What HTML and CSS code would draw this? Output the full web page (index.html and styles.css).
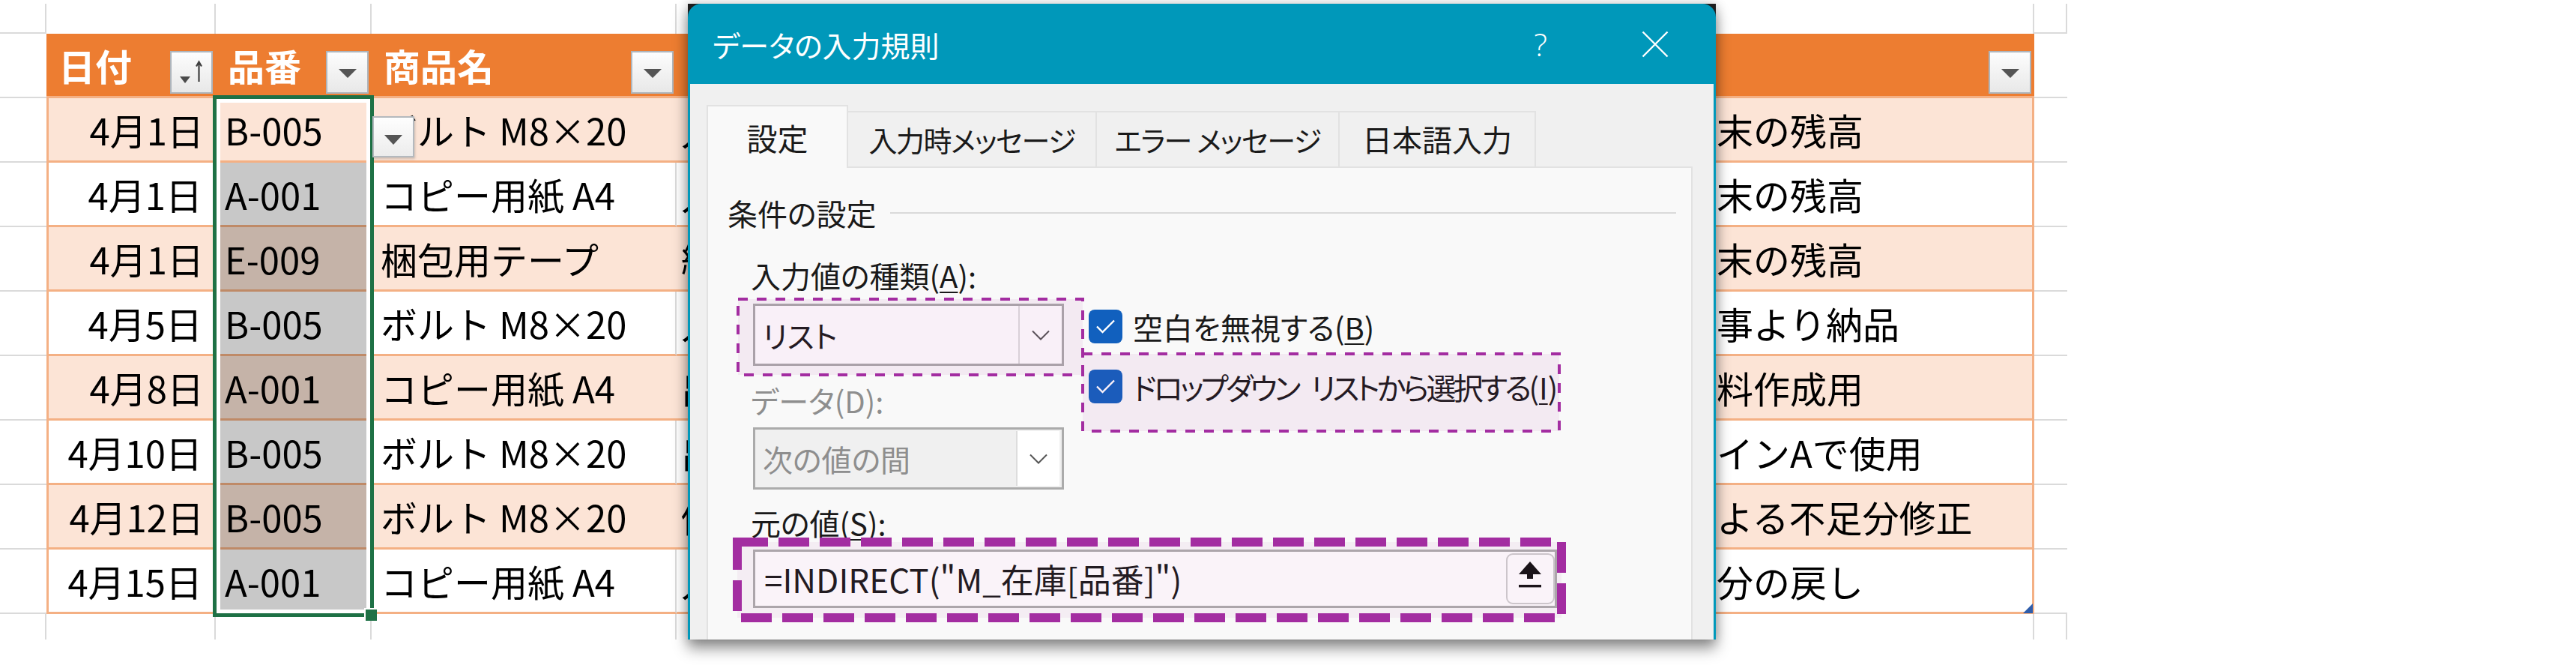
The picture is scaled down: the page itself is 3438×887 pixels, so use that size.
FILE: index.html
```html
<!DOCTYPE html>
<html lang="ja">
<head>
<meta charset="utf-8">
<title>データの入力規則</title>
<link rel="stylesheet" href="styles.css">
</head>
<body>
<div class="screen">
  <div class="sheet">
    <!-- blank row above the table -->
    <div class="c top edge"></div><div class="c top"></div><div class="c top"></div><div class="c top"></div><div class="c top"></div><div class="c top"></div><div class="c top"></div><div class="c top edge"></div>

    <!-- table header -->
    <div class="c rh"></div>
    <div class="c h"><span>日付</span>
      <span class="fb"><svg width="57" height="57" viewBox="0 0 57 57"><polygon points="13,34 27,34 20,43" fill="#4a4a4a"/><path d="M38.5 41V15M35 20.5L38.5 14.5L42 20.5" stroke="#404040" stroke-width="2.2" fill="none"/></svg></span></div>
    <div class="c h"><span>品番</span>
      <span class="fb"><svg width="57" height="57" viewBox="0 0 57 57"><polygon points="17,24 41,24 29,36" fill="#555"/></svg></span></div>
    <div class="c h"><span>商品名</span>
      <span class="fb"><svg width="57" height="57" viewBox="0 0 57 57"><polygon points="17,24 41,24 29,36" fill="#555"/></svg></span></div>
    <div class="c h"></div>
    <div class="c h"></div>
    <div class="c h"><span>備考</span>
      <span class="fb"><svg width="57" height="57" viewBox="0 0 57 57"><polygon points="17,24 41,24 29,36" fill="#555"/></svg></span></div>
    <div class="c rh"></div>

    <!-- rows -->
    <div class="c rh"></div>
    <div class="c d odd first num">4月1日</div><div class="c d odd">B-005</div><div class="c d odd">ボルト M8×20</div><div class="c d odd kd">入</div><div class="c d odd"></div><div class="c d odd last">前年度末の残高</div>
    <div class="c rh"></div>

    <div class="c rh"></div>
    <div class="c d even first num">4月1日</div><div class="c d even">A-001</div><div class="c d even">コピー用紙 A4</div><div class="c d even kd">入</div><div class="c d even"></div><div class="c d even last">前年度末の残高</div>
    <div class="c rh"></div>

    <div class="c rh"></div>
    <div class="c d odd first num">4月1日</div><div class="c d odd">E-009</div><div class="c d odd">梱包用テープ</div><div class="c d odd kd">繰</div><div class="c d odd"></div><div class="c d odd last">前年度末の残高</div>
    <div class="c rh"></div>

    <div class="c rh"></div>
    <div class="c d even first num">4月5日</div><div class="c d even">B-005</div><div class="c d even">ボルト M8×20</div><div class="c d even kd">入</div><div class="c d even"></div><div class="c d even last">山田商事より納品</div>
    <div class="c rh"></div>

    <div class="c rh"></div>
    <div class="c d odd first num">4月8日</div><div class="c d odd">A-001</div><div class="c d odd">コピー用紙 A4</div><div class="c d odd kd">出</div><div class="c d odd"></div><div class="c d odd last">会議資料作成用</div>
    <div class="c rh"></div>

    <div class="c rh"></div>
    <div class="c d even first num">4月10日</div><div class="c d even">B-005</div><div class="c d even">ボルト M8×20</div><div class="c d even kd">出</div><div class="c d even"></div><div class="c d even last">生産ラインAで使用</div>
    <div class="c rh"></div>

    <div class="c rh"></div>
    <div class="c d odd first num">4月12日</div><div class="c d odd">B-005</div><div class="c d odd">ボルト M8×20</div><div class="c d odd kd">修</div><div class="c d odd"></div><div class="c d odd last">棚卸による不足分修正</div>
    <div class="c rh"></div>

    <div class="c rh"></div>
    <div class="c d even first num">4月15日</div><div class="c d even">A-001</div><div class="c d even">コピー用紙 A4</div><div class="c d even kd">入</div><div class="c d even"></div><div class="c d even last">未使用分の戻し</div>
    <div class="c rh"></div>

    <!-- blank row below the table -->
    <div class="c bot"></div><div class="c bot"></div><div class="c bot"></div><div class="c bot"></div><div class="c bot"></div><div class="c bot"></div><div class="c bot"></div><div class="c bot"></div>

    <!-- selection of the 品番 column -->
    <div class="sel-fill"></div>
    <div class="sel-box"></div>
    <div class="fill-handle"></div>
    <div class="dv-btn"><svg width="56" height="55" viewBox="0 0 56 55"><polygon points="16,25 40,25 28,38" fill="#555"/></svg></div>
    <div class="resize"></div>
  </div>

  <div class="dialog">
    <div class="dlg-title">
      <span class="dlg-name">データの入力規則</span>
      <span class="dlg-help">?</span>
      <span class="dlg-close"><svg width="36" height="36" viewBox="0 0 36 36"><path d="M1.5 1.5L34.5 34.5M34.5 1.5L1.5 34.5" stroke="#fff" stroke-width="2.4"/></svg></span>
    </div>
    <div class="dlg-body">
      <div class="tabs">
        <div class="tab on w1">設定</div>
        <div class="tab w2 kana">入力時メッセージ</div>
        <div class="tab w3 kana">エラー メッセージ</div>
        <div class="tab w4">日本語入力</div>
      </div>
      <div class="panel">
        <div class="group"><span>条件の設定</span><span class="rule"></span></div>
        <div class="cols">
          <div class="left">
            <div class="lbl">入力値の種類(<u>A</u>):</div>
            <div class="combo on">
              <span class="val">リスト</span>
              <span class="btn"><svg width="24" height="14" viewBox="0 0 24 14"><path d="M1 1.5L12 12.5L23 1.5" stroke="#555" stroke-width="2" fill="none"/></svg></span>
            </div>
            <div class="lbl off lbl-d">データ(D):</div>
            <div class="combo off">
              <span class="val">次の値の間</span>
              <span class="btn"><svg width="24" height="14" viewBox="0 0 24 14"><path d="M1 1.5L12 12.5L23 1.5" stroke="#555" stroke-width="2" fill="none"/></svg></span>
            </div>
          </div>
          <div class="right">
            <div class="chk"><svg width="45" height="45" viewBox="0 0 45 45"><rect x="0" y="0" width="45" height="45" rx="8" fill="#1160BE"/><path d="M11 22.5L18.5 30L34 14.5" stroke="#fff" stroke-width="2.4" fill="none"/></svg><span>空白を無視する(<u>B</u>)</span></div>
            <div class="chk"><svg width="45" height="45" viewBox="0 0 45 45"><rect x="0" y="0" width="45" height="45" rx="8" fill="#1160BE"/><path d="M11 22.5L18.5 30L34 14.5" stroke="#fff" stroke-width="2.4" fill="none"/></svg><span><span class="tight">ドロップダウン リストから選択する</span>(<u>I</u>)</span></div>
          </div>
        </div>
        <div class="lbl lbl-s">元の値(<u>S</u>):</div>
        <div class="src">
          <span class="formula">=INDIRECT("M_在庫[品番]")</span>
          <span class="pick"><svg width="65" height="68" viewBox="0 0 65 68"><path d="M32 11L47 28H36V34H28V28H17Z" fill="#111"/><rect x="17" y="42" width="30" height="3.4" fill="#111"/></svg></span>
        </div>
      </div>
    </div>
    <svg class="marks" width="1372" height="848" viewBox="0 0 1372 848">
      <rect x="67" y="394" width="460" height="101" fill="rgba(163,45,161,0.07)" stroke="#A32DA1" stroke-width="4" stroke-dasharray="13 12"/>
      <rect x="527" y="467" width="636" height="103" fill="rgba(163,45,161,0.07)" stroke="#A32DA1" stroke-width="4" stroke-dasharray="13 12"/>
      <rect x="66" y="718" width="1100" height="101" fill="rgba(163,45,161,0.06)" stroke="#A32DA1" stroke-width="12" stroke-dasharray="41 14"/>
    </svg>
  </div>
</div>
</body>
</html>
```

FILE: styles.css
```css
html, body {
  margin: 0;
  background: #fff;
}

.screen {
  position: relative;
  width: 3438px;
  height: 887px;
  overflow: hidden;
  padding-top: 5px;
  box-sizing: border-box;
  font-family: "Noto Sans CJK JP", "Noto Sans", sans-serif;
}

/* worksheet */
.sheet {
  position: relative;
  display: grid;
  grid-template-columns: 62px 226px 208px 407px 597px 644px 571px 44px;
  grid-template-rows: 40px repeat(9, 86px) 34px;
  width: 2759px;
  font-size: 49px;
  color: #000;
}

.c {
  box-sizing: border-box;
  display: flex;
  align-items: center;
  white-space: nowrap;
  overflow: hidden;
  min-width: 0;
}

.top { border-right: 2px solid #DADADA; }
.top.edge { border-bottom: 2px solid #DADADA; }
.rh { border-bottom: 2px solid #DADADA; }
.bot { border-right: 2px solid #DADADA; }

.h {
  background: #ED7D31;
  color: #fff;
  font-weight: 700;
  justify-content: space-between;
  padding: 0 4px 0 16px;
  border-bottom: 3px solid #F4B084;
}

.fb {
  align-self: flex-end;
  margin-bottom: 3px;
  width: 57px;
  height: 57px;
  box-sizing: border-box;
  border: 2px solid #AEB5BC;
  background: linear-gradient(#fdfdfd, #e8e8e8);
  display: flex;
}
.fb svg { margin: -2px; }

.d {
  padding-left: 12px;
  border-bottom: 3px solid #F4B084;
}
.odd { background: #FCE4D6; }
.even { background: #fff; border-right: 2px solid #DADADA; }
.first { border-left: 3px solid #F4B084; }
.last { border-right: 3px solid #F4B084; padding-left: 0; }
.num { justify-content: flex-end; padding-left: 0; padding-right: 16px; }
.kd { padding-left: 6px; }

/* selection overlay */
.sel-fill {
  position: absolute;
  left: 294px;
  top: 212px;
  width: 195px;
  height: 597px;
  background: rgba(0, 0, 0, 0.215);
}
.sel-box {
  position: absolute;
  left: 284px;
  top: 122px;
  width: 215px;
  height: 696px;
  box-sizing: border-box;
  border: 5px solid #1E7145;
  box-shadow: inset 0 0 0 5px #fff;
}
.fill-handle {
  position: absolute;
  left: 486px;
  top: 806px;
  width: 17px;
  height: 17px;
  box-sizing: border-box;
  background: #1E7145;
  border: 2px solid #fff;
  border-bottom: none;
  border-right: none;
}
.dv-btn {
  position: absolute;
  left: 497px;
  top: 150px;
  width: 56px;
  height: 55px;
  box-sizing: border-box;
  border: 2px solid #B4B9BE;
  background: linear-gradient(#fefefe, #ececec);
  box-shadow: 1px 2px 3px rgba(0, 0, 0, 0.18);
  display: flex;
}
.dv-btn svg { margin: -2px; }
.resize {
  position: absolute;
  left: 2700px;
  top: 800px;
  width: 0;
  height: 0;
  border-left: 13px solid transparent;
  border-bottom: 13px solid #2F5DAA;
}

/* dialog window */
.dialog {
  position: absolute;
  left: 918px;
  top: 5px;
  width: 1372px;
  height: 848px;
  background: #1d1d1d;
  box-shadow: 0 12px 18px rgba(0, 0, 0, 0.42), 0 0 14px rgba(0, 0, 0, 0.2);
  display: flex;
  flex-direction: column;
  overflow: hidden;
  font-feature-settings: "palt";
  color: #1a1a1a;
}

.dlg-title {
  flex: none;
  height: 107px;
  box-sizing: border-box;
  background: #0098BA;
  border-radius: 18px 18px 0 0;
  display: flex;
  align-items: center;
  padding: 0 51px 0 33px;
  color: #fff;
}
.dlg-name { font-size: 39px; }
.dlg-help {
  margin-left: auto;
  width: 60px;
  text-align: center;
  font-family: "Open Sans", sans-serif;
  font-weight: 300;
  font-size: 42px;
}
.dlg-close {
  width: 60px;
  margin-left: 93px;
  display: flex;
  justify-content: center;
}

.dlg-body {
  flex: 1;
  min-height: 0;
  background: #F0F0F0;
  border-left: 3px solid #0098BA;
  border-right: 3px solid #0098BA;
  padding: 28px 28px 0 22px;
  display: flex;
  flex-direction: column;
}

.tabs {
  display: flex;
  align-items: flex-end;
  height: 84px;
  margin-bottom: -2px;
  position: relative;
  z-index: 1;
}
.tab {
  box-sizing: border-box;
  height: 76px;
  display: flex;
  align-items: center;
  justify-content: center;
  background: #F0F0F0;
  border-top: 2px solid #E2E2E2;
  border-right: 2px solid #E2E2E2;
  border-bottom: 2px solid #E2E2E2;
  font-size: 40px;
  padding-bottom: 2px;
  white-space: nowrap;
}
.tab.kana {
  font-size: 38px;
  letter-spacing: -1.5px;
}
.tab.on {
  height: 84px;
  background: #F9F9F9;
  border-left: 2px solid #E2E2E2;
  border-bottom: none;
  padding-bottom: 0;
  font-size: 41px;
}
.w1 { width: 189px; }
.w2 { width: 332px; }
.w3 { width: 324px; }
.w4 { width: 262px; }

.panel {
  flex: 1;
  background: #F9F9F9;
  border: 2px solid #E2E2E2;
  border-bottom: none;
  padding-top: 38px;
  font-size: 40px;
}

.group {
  display: flex;
  align-items: center;
  height: 44px;
  padding: 0 20px 0 26px;
}
.rule {
  flex: 1;
  height: 2px;
  background: #DADADA;
  margin-left: 18px;
}

.cols {
  display: flex;
  margin-top: 38px;
  padding-left: 60px;
}
.left {
  width: 415px;
  display: flex;
  flex-direction: column;
}
.lbl {
  height: 46px;
  line-height: 46px;
  margin-left: -3px;
  margin-bottom: 15px;
  white-space: nowrap;
}
.lbl u, .chk u { text-underline-offset: 5px; text-decoration-thickness: 2px; }
.lbl.off { color: #8E8E8E; }
.lbl-d { margin-top: 23px; margin-bottom: 13px; }
.lbl-s { margin: 21px 0 0 57px; }

.combo {
  box-sizing: border-box;
  height: 83px;
  border: 3px solid #ABABAB;
  background: #fff;
  display: flex;
  align-items: center;
}
.combo .val { flex: 1; padding-left: 10px; }
.combo .btn {
  width: 56px;
  align-self: stretch;
  border-left: 2px solid #DDDDDD;
  display: flex;
  align-items: center;
  justify-content: center;
}
.combo.off { background: #F0F0F0; color: #8E8E8E; }
.combo.off .btn { background: #fff; margin: 2px 3px 2px 0; }

.right {
  margin-left: 33px;
  padding-top: 69px;
  display: flex;
  flex-direction: column;
  gap: 35px;
}
.chk {
  display: flex;
  align-items: center;
  height: 45px;
  gap: 14px;
  white-space: nowrap;
}
.chk svg { flex: none; }
.chk .tight { letter-spacing: -3.8px; word-spacing: 12px; }

.src {
  box-sizing: border-box;
  margin: 13px 0 0 60px;
  width: 1073px;
  height: 78px;
  border: 3px solid #ADADAD;
  background: #fff;
  display: flex;
  align-items: center;
}
.formula {
  flex: 1;
  padding-left: 12px;
  font-size: 44px;
  white-space: nowrap;
}
.pick {
  box-sizing: border-box;
  width: 65px;
  height: 68px;
  border: 2px solid #CFCFCF;
  border-radius: 9px;
  background: #fff;
  display: flex;
}
.pick svg { margin: -2px; }

.marks {
  position: absolute;
  left: 0;
  top: 0;
  pointer-events: none;
}
```
